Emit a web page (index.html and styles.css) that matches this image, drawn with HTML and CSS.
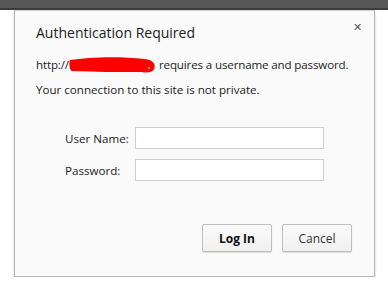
FILE: index.html
```html
<!DOCTYPE html>
<html lang="en">
<head>
    <meta charset="UTF-8">
    <title>Authentication Required</title>
    <link rel="stylesheet" href="styles.css">
</head>
<body>
    <div class="topbar"></div>
    <div class="dialog">
        <span class="close">&#x2715;</span>
        <h1 class="title">Authentication Required</h1>
        <p class="msg">http://<span class="scribble"><svg width="87" height="16" viewBox="0 0 87 16"><path d="M1 3 C20 0 50 -1 76 2 C85 3 87 8 85 12 C83 16 78 16 72 15 C50 15 25 15 3 14 C0 13 0 5 1 3 Z" fill="#f00"/><circle cx="80" cy="11" r="1" fill="#faa"/></svg></span>requires a username and password.</p>
        <p class="msg">Your connection to this site is not private.</p>

        <form class="fields">
            <label for="user">User Name:</label>
            <input type="text" id="user">
            <label for="pass">Password:</label>
            <input type="password" id="pass">
        </form>

        <div class="buttons">
            <button type="button" class="btn primary">Log In</button>
            <button type="button" class="btn">Cancel</button>
        </div>
    </div>
</body>
</html>
```
FILE: styles.css
```css
        body {
            margin: 0;
            background: #fff;
            font-family: "Open Sans", Arial, sans-serif;
            color: #222;
        }
        .topbar {
            height: 8px;
            background-color: #585858;
            border-bottom: 2px solid #3c3c3c;
        }
        .dialog {
            position: relative;
            width: 338px;
            height: 265px;
            margin-left: 14px;
            border: 1px solid #b8b8b8;
            border-top: 1px solid #d0d0d0;
            background-color: #fafafa;
            box-shadow: 0 2px 2px rgba(0, 0, 0, 0.25);
            padding: 0 0 0 21px;
        }
        .close {
            position: absolute;
            right: 12px;
            top: 8px;
            font-size: 11px;
            color: #555;
        }
        .title {
            margin: 12px 0 14px;
            font-size: 14px;
            font-weight: normal;
            line-height: 20px;
            color: #222;
        }
        .msg {
            margin: 0 0 9px;
            font-size: 11.6px;
            line-height: 16px;
            display: flex;
            align-items: center;
        }
        .msg:first-of-type {
            letter-spacing: -0.15px;
        }
        .scribble {
            display: inline-flex;
            margin: 0 3px 0 0;
        }
        .fields {
            display: grid;
            grid-template-columns: 70px 189px;
            row-gap: 10px;
            margin: 29px 0 0 29px;
            align-items: center;
        }
        .fields label {
            font-size: 11.6px;
        }
        .fields input {
            height: 22px;
            box-sizing: border-box;
            border: 1px solid #cfcfcf;
            background: #fff;
            margin: 0;
        }
        .buttons {
            display: flex;
            justify-content: flex-end;
            gap: 10px;
            margin: 43px 22px 0 0;
        }
        .btn {
            width: 70px;
            height: 28px;
            border: 1px solid #c0c0c0;
            border-radius: 2px;
            background: linear-gradient(#fbfbfb, #f0f0f0);
            font-family: "Open Sans", Arial, sans-serif;
            font-size: 12px;
            color: #333;
            box-shadow: 0 1px 1px rgba(0, 0, 0, 0.12);
        }
        .primary {
            font-weight: bold;
            color: #111;
        }
```
